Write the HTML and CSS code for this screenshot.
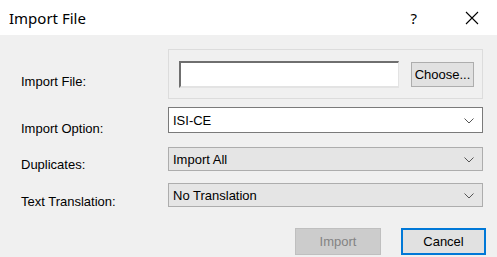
FILE: index.html
```html
<!DOCTYPE html>
<html>

<head>
    <title>Import File</title>
    <link rel="stylesheet" href="styles.css">
</head>

<body>
    <div class="dialog">
        <div class="titlebar">
            <span class="title">Import File</span>
            <span class="help">?</span>
            <svg class="close" width="14" height="14" viewBox="0 0 14 14">
                <path d="M1 1 L13 13 M13 1 L1 13" stroke="#000" stroke-width="1.1" fill="none" />
            </svg>
        </div>

        <div class="content">
            <div class="row row-file">
                <label class="label">Import File:</label>
                <div class="filegroup">
                    <input type="text" class="path">
                    <button class="btn choose">Choose...</button>
                </div>
            </div>

            <div class="row row-option">
                <label class="label">Import Option:</label>
                <div class="combo editable">
                    <span>ISI-CE</span>
                    <svg class="chev" width="10" height="6" viewBox="0 0 10 6">
                        <path d="M0.5 0.5 L5 5 L9.5 0.5" stroke="#555" stroke-width="1" fill="none" />
                    </svg>
                </div>
            </div>

            <div class="row row-dup">
                <label class="label">Duplicates:</label>
                <div class="combo">
                    <span>Import All</span>
                    <svg class="chev" width="10" height="6" viewBox="0 0 10 6">
                        <path d="M0.5 0.5 L5 5 L9.5 0.5" stroke="#555" stroke-width="1" fill="none" />
                    </svg>
                </div>
            </div>

            <div class="row row-trans">
                <label class="label">Text Translation:</label>
                <div class="combo">
                    <span>No Translation</span>
                    <svg class="chev" width="10" height="6" viewBox="0 0 10 6">
                        <path d="M0.5 0.5 L5 5 L9.5 0.5" stroke="#555" stroke-width="1" fill="none" />
                    </svg>
                </div>
            </div>

            <div class="actions">
                <button class="btn action" disabled>Import</button>
                <button class="btn action default">Cancel</button>
            </div>
        </div>
    </div>
</body>

</html>
```

FILE: styles.css
```css
body {
    margin: 0;
    font-family: 'Liberation Sans', Arial, sans-serif;
    font-size: 13px;
    color: #000;
    background-color: #f0f0f0;
}

.dialog {
    width: 497px;
    height: 257px;
    overflow: hidden;
    background-color: #f0f0f0;
}

/* title bar */
.titlebar {
    height: 35px;
    background-color: #fff;
    display: flex;
    align-items: center;
}

.title {
    font-family: 'Noto Sans', sans-serif;
    font-size: 15px;
    padding-left: 9px;
    flex: 1;
}

.help {
    font-family: 'Noto Sans', sans-serif;
    font-size: 15px;
    margin-right: 48px;
}

.close {
    margin-right: 18px;
}

/* form */
.content {
    padding: 14px 11px 0 21px;
}

.row {
    display: flex;
    align-items: flex-start;
}

.label {
    width: 147px;
    flex: none;
    line-height: 16px;
}

.row-file {
    height: 50px;
}

.row-file .label {
    margin-top: 25px;
}

.row-option {
    height: 26px;
    margin-top: 8px;
}

.row-option .label {
    margin-top: 14px;
}

.row-dup {
    height: 24px;
    margin-top: 14px;
}

.row-dup .label {
    margin-top: 10px;
}

.row-trans {
    height: 24px;
    margin-top: 12px;
}

.row-trans .label {
    margin-top: 11px;
}

.filegroup {
    width: 315px;
    height: 50px;
    box-sizing: border-box;
    border: 1px solid #dcdcdc;
    display: flex;
    align-items: center;
    padding: 0 8px 0 10px;
}

.path {
    width: 220px;
    height: 27px;
    box-sizing: border-box;
    margin: 0;
    padding: 0;
    border-style: solid;
    border-width: 2px 1px 2px 2px;
    border-color: #6f6f6f #e3e3e3 #e3e3e3 #6f6f6f;
    background-color: #fff;
}

.btn {
    font-family: inherit;
    font-size: 13px;
    margin: 0;
    padding: 0;
    background-color: #e1e1e1;
    border: 1px solid #adadad;
    color: #000;
}

.choose {
    width: 63px;
    height: 25px;
    margin-left: 12px;
}

.combo {
    width: 315px;
    height: 24px;
    box-sizing: border-box;
    border: 1px solid #adadad;
    background-color: #e5e5e5;
    display: flex;
    align-items: center;
    justify-content: space-between;
    padding: 0 8px 0 4px;
}

.combo.editable {
    height: 26px;
    background-color: #fff;
    border-color: #7a7a7a;
}

.chev {
    margin-top: 1px;
}

.actions {
    display: flex;
    justify-content: flex-end;
    gap: 20px;
    margin-top: 21px;
}

.action {
    width: 86px;
    height: 27px;
    box-sizing: border-box;
}

.action:disabled {
    background-color: #cccccc;
    border-color: #bfbfbf;
    color: #838383;
}

.action.default {
    width: 85px;
    border: 2px solid #0078d7;
}
```
